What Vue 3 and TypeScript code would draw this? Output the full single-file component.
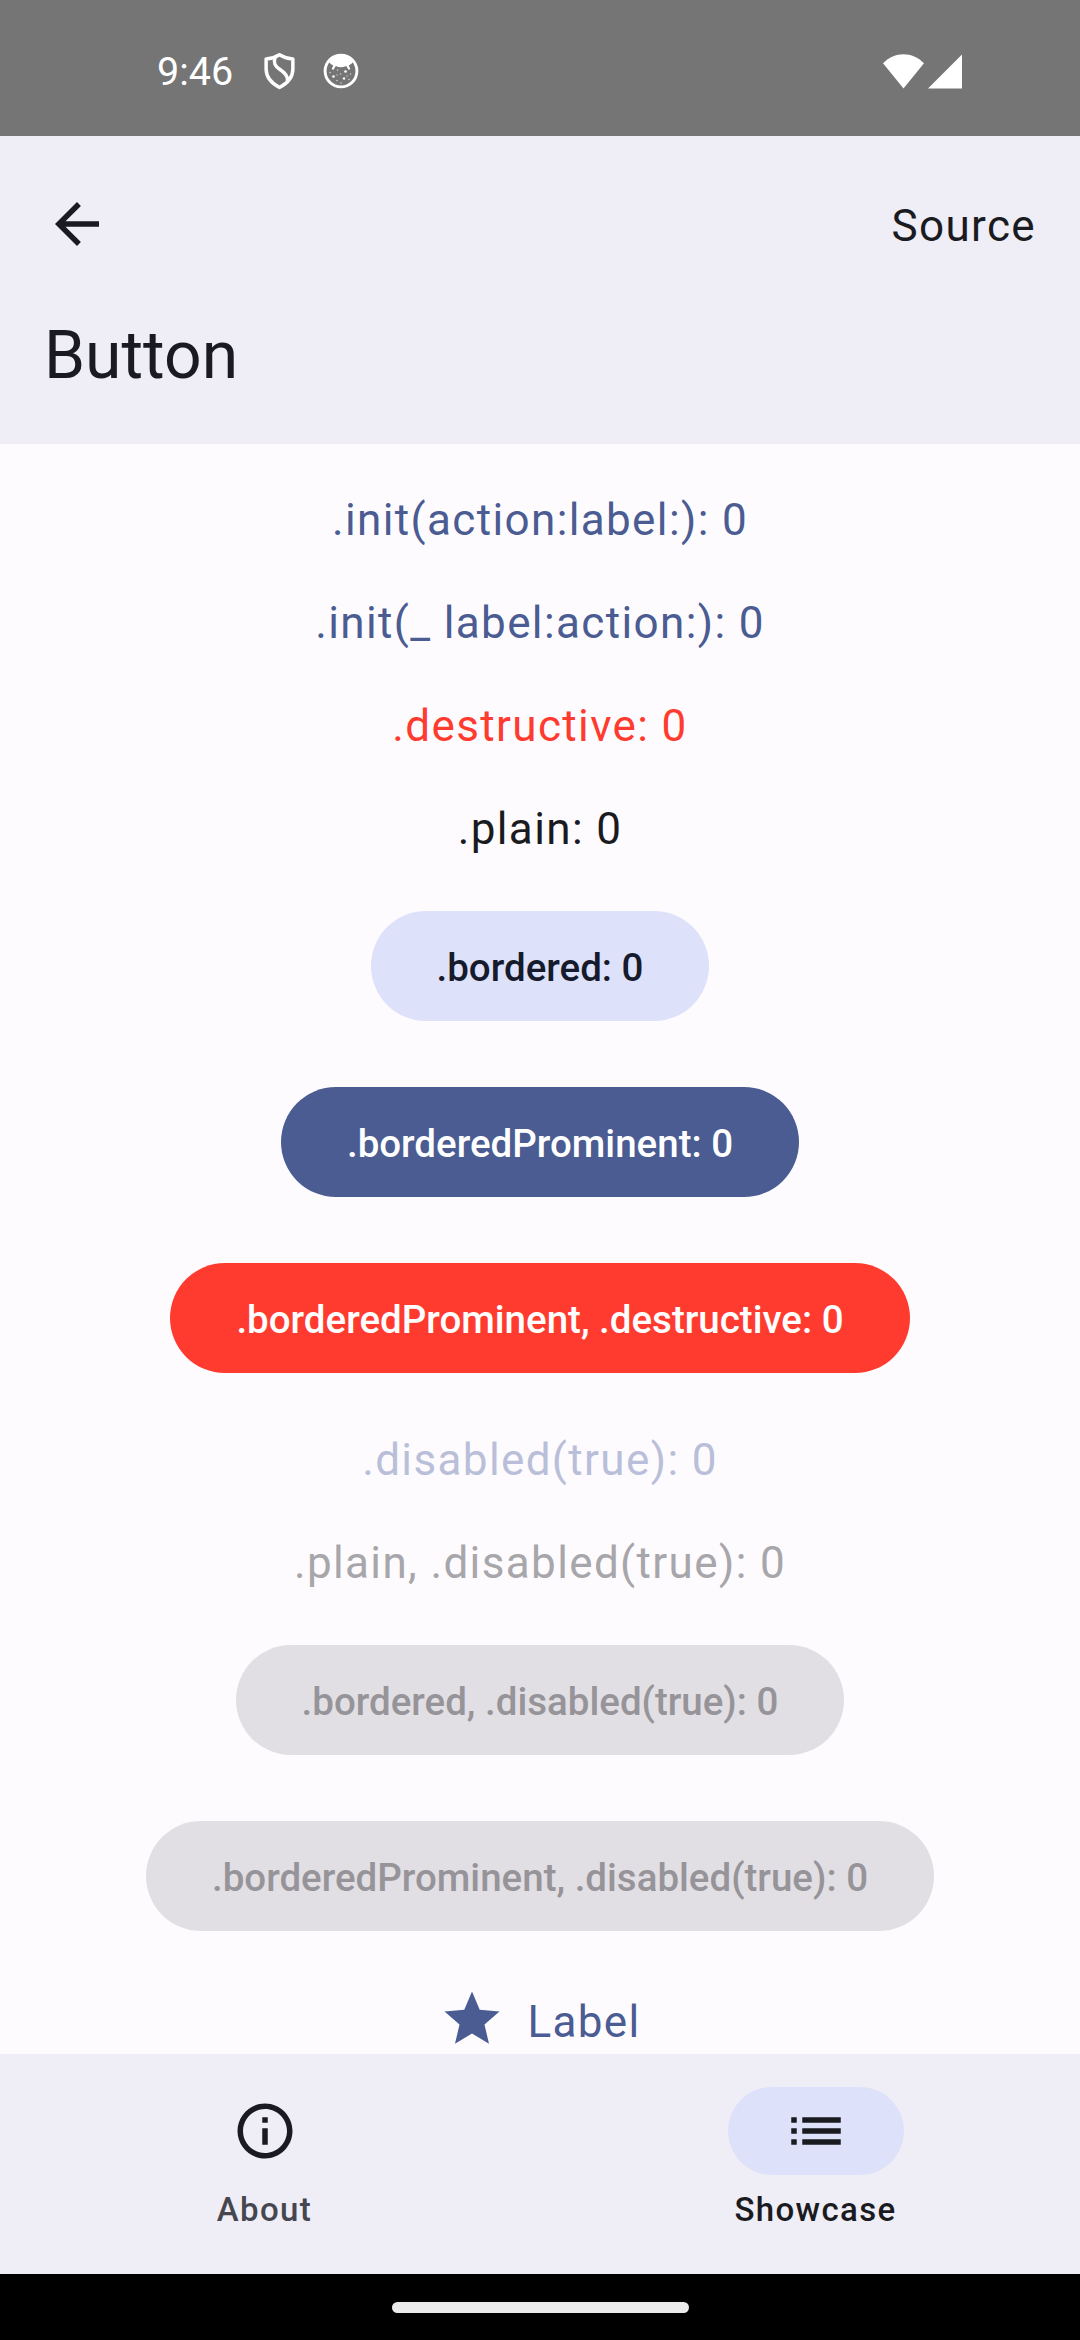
<script setup lang="ts">
import { ref } from 'vue'

type Variant =
  | 'tint'
  | 'destructive'
  | 'plain'
  | 'tint-disabled'
  | 'plain-disabled'
  | 'bordered'
  | 'prominent'
  | 'prominent-destructive'
  | 'filled-disabled'

interface ButtonDemo {
  title: string
  variant: Variant
  filled?: boolean
  disabled?: boolean
}

const tapCount = ref(0)

const demos: ButtonDemo[] = [
  { title: '.init(action:label:)', variant: 'tint' },
  { title: '.init(_ label:action:)', variant: 'tint' },
  { title: '.destructive', variant: 'destructive' },
  { title: '.plain', variant: 'plain' },
  { title: '.bordered', variant: 'bordered', filled: true },
  { title: '.borderedProminent', variant: 'prominent', filled: true },
  { title: '.borderedProminent, .destructive', variant: 'prominent-destructive', filled: true },
  { title: '.disabled(true)', variant: 'tint-disabled', disabled: true },
  { title: '.plain, .disabled(true)', variant: 'plain-disabled', disabled: true },
  { title: '.bordered, .disabled(true)', variant: 'filled-disabled', filled: true, disabled: true },
  { title: '.borderedProminent, .disabled(true)', variant: 'filled-disabled', filled: true, disabled: true },
]
</script>

<template>
  <div class="screen">
    <div class="status-bar">
      <span class="time">9:46</span>
      <svg class="shield" viewBox="0 0 32 38" fill="none" stroke="#fff" stroke-width="3.6" stroke-linejoin="round">
        <path d="M16 2.2C11.5 5 7 6.3 2.2 6.6V17c0 8.500 5 14.500 13.800 19C24.800 31.500 29.800 25.500 29.800 17V6.600C25 6.300 20.500 5 16 2.200Z" />
        <path d="M11.400 5c-1.800 5.500-.4 8.800 4.800 12.200 5.500 3.600 8.800 6.800 8.200 12.200" />
      </svg>
      <svg class="face" viewBox="0 0 36 36">
        <circle cx="18" cy="18" r="15.900" fill="none" stroke="#fff" stroke-width="2.900" />
        <path d="M5.500 8.500C9 4 13 2 18 2s9 2 12.500 6.500c-1.500 2-3 3.200-4.800 4l1.600 3.200-1.600 1.200-2.500-3.900c-3.200 1.800-7.200 1.800-10.400 0l-2.500 3.900-1.600-1.200 1.600-3.200c-1.800-.8-3.300-2-4.800-4Z" fill="#fff" />
        <g fill="#fff">
          <circle cx="10.500" cy="23.500" r="1.300" />
          <circle cx="22.500" cy="18.500" r="1.300" />
          <circle cx="21" cy="25.500" r="1.200" />
          <g opacity=".65">
            <circle cx="14.500" cy="17" r=".8" />
            <circle cx="17.500" cy="21" r=".8" />
            <circle cx="14" cy="27.500" r=".8" />
            <circle cx="7" cy="19.500" r=".8" />
            <circle cx="27.500" cy="21" r=".8" />
            <circle cx="26" cy="26.500" r=".8" />
            <circle cx="18" cy="30" r=".8" />
            <circle cx="14" cy="22" r=".7" />
            <circle cx="24" cy="23" r=".7" />
          </g>
        </g>
      </svg>
      <div class="signals">
        <svg width="41" height="35" viewBox="0 0 41 35"><path d="M0 9.200C6 3.200 13 .2 20.500.2S35 3.200 41 9.200L20.500 34.600Z" fill="#fff" /></svg>
        <svg width="34" height="35" viewBox="0 0 34 35"><path d="M34 .4V34.600H0Z" fill="#fff" /></svg>
      </div>
    </div>

    <header class="app-bar">
      <div class="bar-row">
        <svg class="icon" viewBox="0 0 24 24"><path d="M20 11H7.830l5.590-5.590L12 4l-8 8 8 8 1.410-1.410L7.830 13H20v-2z" /></svg>
        <span class="source">Source</span>
      </div>
      <h1>Button</h1>
    </header>

    <main class="content">
      <template v-for="demo in demos" :key="demo.title">
        <div v-if="demo.filled" class="touch-target">
          <button class="pill" :class="demo.variant" :disabled="demo.disabled" @click="tapCount++">{{ demo.title }}: {{ tapCount }}</button>
        </div>
        <button v-else class="text-button" :class="demo.variant" :disabled="demo.disabled" @click="tapCount++">{{ demo.title }}: {{ tapCount }}</button>
      </template>
      <button class="label-button tint">
        <svg class="icon" viewBox="0 0 24 24"><path d="M12 17.270L18.180 21l-1.640-7.030L22 9.240l-7.190-.61L12 2 9.190 8.630 2 9.240l5.460 4.730L5.820 21z" /></svg>
        <span>Label</span>
      </button>
    </main>

    <nav class="tabs">
      <div class="tab">
        <div class="indicator">
          <svg class="icon" viewBox="0 0 24 24"><path d="M11 7h2v2h-2zm0 4h2v6h-2zm1-9C6.480 2 2 6.480 2 12s4.480 10 10 10 10-4.480 10-10S17.520 2 12 2zm0 18c-4.410 0-8-3.590-8-8s3.590-8 8-8 8 3.590 8 8-3.590 8-8 8z" /></svg>
        </div>
        <span class="tab-label">About</span>
      </div>
      <div class="tab selected">
        <div class="indicator">
          <svg class="icon" viewBox="0 0 24 24"><path d="M3 13h2v-2H3v2zm0 4h2v-2H3v2zm0-8h2V7H3v2zm4 4h14v-2H7v2zm0 4h14v-2H7v2zM7 7v2h14V7H7z" /></svg>
        </div>
        <span class="tab-label">Showcase</span>
      </div>
    </nav>

    <div class="gesture-bar"><div class="handle"></div></div>
  </div>
</template>

<style>
body {
  margin: 0;
  background: #000;
}
</style>

<style scoped>
.screen {
  display: flex;
  flex-direction: column;
  width: 1080px;
  height: 2340px;
  overflow: hidden;
  background: #fefbff;
  color: #1a1b21;
  font-family: Roboto, "Liberation Sans", sans-serif;
  font-size: 44px;
  letter-spacing: 1.375px;
}

.status-bar {
  box-sizing: border-box;
  flex: none;
  display: flex;
  align-items: center;
  height: 136px;
  padding: 6px 118px 0 157px;
  background: #757575;
  color: #fff;
}

.time {
  width: 107px;
  padding-top: 2px;
  font-size: 39.5px;
  line-height: 52px;
  letter-spacing: 0;
}

.shield {
  width: 31px;
  height: 38px;
}

.face {
  width: 36px;
  height: 36px;
  margin-left: 28px;
}

.signals {
  display: flex;
  gap: 4px;
  margin-left: auto;
}

.icon {
  flex: none;
  display: block;
  width: 66px;
  height: 66px;
  fill: currentColor;
}

.app-bar {
  flex: none;
  height: 308px;
  background: #efedf6;
}

.bar-row {
  display: flex;
  align-items: center;
  justify-content: space-between;
  height: 176px;
  padding: 0 44px;
}

.source {
  padding-top: 4px;
}

h1 {
  margin: 0;
  padding: 0 44px;
  font-size: 66px;
  font-weight: 400;
  line-height: 88px;
  letter-spacing: 0;
}

.content {
  flex: 1;
  min-height: 0;
  display: flex;
  flex-direction: column;
  align-items: center;
  gap: 44px;
  padding-top: 44px;
  overflow: hidden;
}

button {
  flex: none;
  border: 0;
  padding: 0;
  background: none;
  font: inherit;
  letter-spacing: inherit;
  white-space: nowrap;
}

.text-button {
  height: 59px;
  padding-top: 5px;
  line-height: 54px;
}

.touch-target {
  flex: none;
  display: flex;
  align-items: center;
  height: 132px;
}

.pill {
  height: 110px;
  padding: 3px 66px 0;
  border-radius: 55px;
  font-size: 38.5px;
  font-weight: 500;
  letter-spacing: 0;
}

.label-button {
  display: flex;
  align-items: center;
  gap: 22px;
  height: 66px;
}

.label-button span {
  padding-top: 6px;
}

.tint { color: #4a5c92; }
.destructive { color: #ff3b30; }
.plain { color: #1a1b21; }
.tint-disabled { color: #babfd9; }
.plain-disabled { color: #a7a6aa; }
.bordered { background: #dde1f9; color: #151b2c; }
.prominent { background: #4a5c92; color: #fff; }
.prominent-destructive { background: #ff3b30; color: #fff; }
.filled-disabled { background: #e1dfe4; color: #969499; }

.tabs {
  flex: none;
  display: flex;
  gap: 22px;
  height: 220px;
  background: #efedf6;
}

.tab {
  flex: 1;
  display: flex;
  flex-direction: column;
  align-items: center;
  padding-top: 33px;
}

.indicator {
  display: flex;
  align-items: center;
  justify-content: center;
  width: 176px;
  height: 88px;
  border-radius: 44px;
}

.selected .indicator {
  background: #dde1f9;
}

.tab-label {
  margin-top: 13px;
  color: #45464f;
  font-size: 33px;
  font-weight: 500;
  line-height: 44px;
}

.selected .tab-label {
  color: #1a1b21;
}

.gesture-bar {
  flex: none;
  display: flex;
  justify-content: center;
  height: 66px;
  background: #000;
}

.handle {
  width: 297px;
  height: 11px;
  margin-top: 27.5px;
  border-radius: 6px;
  background: #ebebeb;
}
</style>
